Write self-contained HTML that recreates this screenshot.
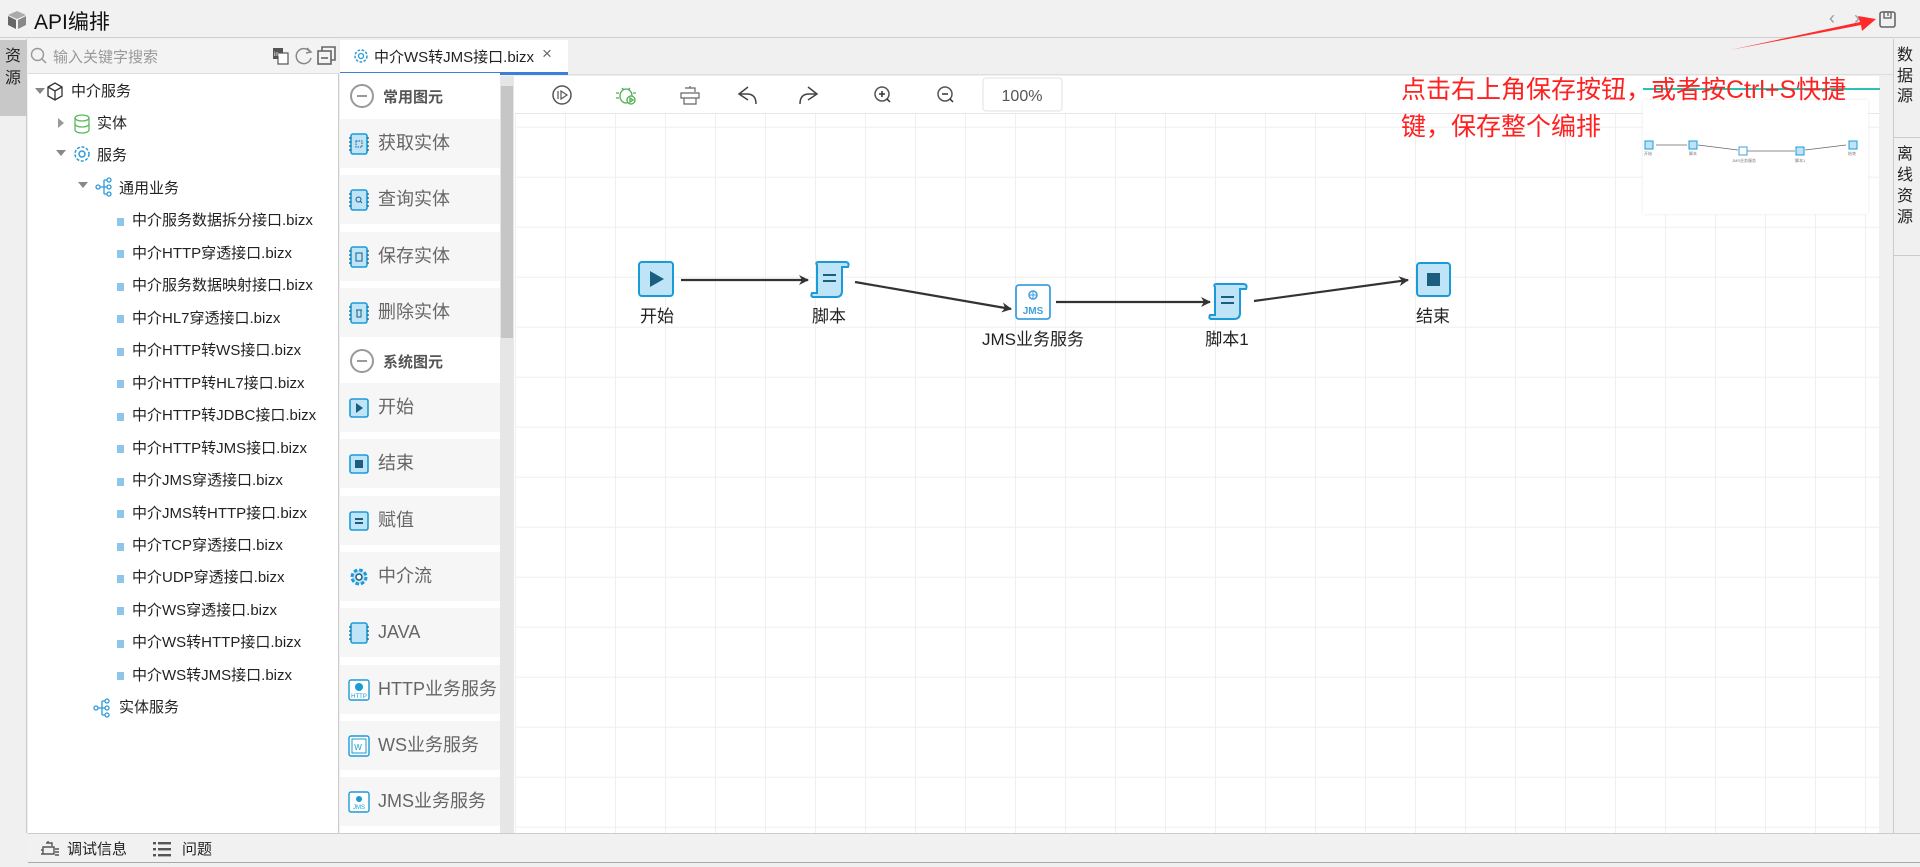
<!DOCTYPE html>
<html><head><meta charset="utf-8">
<style>
*{margin:0;padding:0;box-sizing:border-box}
body{width:1920px;height:867px;overflow:hidden;background:#f0f0f0;font-family:"Liberation Sans","Noto Sans CJK SC",sans-serif;color:#222;position:relative}
.a{position:absolute}
.tr{position:absolute;font-size:15px;white-space:nowrap;line-height:20px}
.pi{position:absolute;left:340px;width:160px;height:49px;background:#f6f6f6}
.pi span{position:absolute;left:38px;top:13px;font-size:18px;color:#666;line-height:22px}
.pi svg{position:absolute;left:8px;top:14px}
.ph{position:absolute;left:340px;width:160px;height:46px;background:#fff}
.ph span{position:absolute;left:43px;top:13px;font-size:15px;font-weight:bold;color:#555}
.ph i{position:absolute;left:10px;top:11px;width:24px;height:24px;border:2px solid #999;border-radius:50%}
.ph i:after{content:"";position:absolute;left:5px;top:9px;width:10px;height:2px;background:#999}
.lbl{position:absolute;font-size:17px;color:#222;white-space:nowrap;transform:translateX(-50%)}
</style></head><body>
<div class="a" style="left:0;top:0;width:1920px;height:38px;background:#f1f1f1;border-bottom:1px solid #cfcfcf"></div>
<svg class="a" style="left:7px;top:10px" width="20" height="20" viewBox="0 0 20 20"><path d="M10 1 L19 5 L10 9 L1 5Z" fill="#aaa"/><path d="M1 6 L9 10 L9 19 L1 15Z" fill="#666"/><path d="M11 10 L19 6 L19 15 L11 19Z" fill="#888"/></svg>
<div class="a" style="left:34px;top:6px;font-size:21px;color:#111">API编排</div>
<div class="a" style="left:1829px;top:8px;font-size:18px;color:#999">&lsaquo;</div>
<div class="a" style="left:1854px;top:8px;font-size:18px;color:#999">&rsaquo;</div>
<svg class="a" style="left:1879px;top:11px" width="17" height="17" viewBox="0 0 17 17"><rect x="1" y="1" width="15" height="15" rx="2" fill="none" stroke="#666" stroke-width="1.6"/><rect x="5" y="1" width="7" height="6" fill="none" stroke="#666" stroke-width="1.4"/><line x1="9" y1="2" x2="9" y2="5" stroke="#666" stroke-width="1.3"/></svg>

<div class="a" style="left:0;top:39px;width:27px;height:794px;background:#f0f0f0;border-right:1px solid #ccc"></div>
<div class="a" style="left:0;top:40px;width:27px;height:76px;background:#c8c8c8"></div>
<div class="a" style="left:5px;top:46px;font-size:16px;line-height:22px;width:18px;color:#222">资<br>源</div>

<div class="a" style="left:28px;top:39px;width:311px;height:794px;background:#fff;border-right:1px solid #ccc"></div>
<div class="a" style="left:28px;top:39px;width:311px;height:35px;background:#f3f3f3;border-bottom:1px solid #ddd"></div>
<svg class="a" style="left:30px;top:47px" width="18" height="18" viewBox="0 0 18 18"><circle cx="7.5" cy="7.5" r="6" fill="none" stroke="#999" stroke-width="1.4"/><line x1="12" y1="12" x2="16" y2="16" stroke="#999" stroke-width="1.5"/></svg>
<div class="a" style="left:53px;top:46px;font-size:15px;color:#999">输入关键字搜索</div>
<svg class="a" style="left:272px;top:47px" width="18" height="18" viewBox="0 0 18 18"><rect x="1" y="1" width="10" height="11" fill="#555"/><rect x="6" y="6" width="10" height="11" fill="#fff" stroke="#555" stroke-width="1.2"/><text x="2" y="9" font-size="6" fill="#fff" font-family="Liberation Sans">in</text></svg>
<svg class="a" style="left:294px;top:46px" width="20" height="20" viewBox="0 0 20 20"><path d="M16 6 A7.5 7.5 0 1 0 17 12" fill="none" stroke="#888" stroke-width="1.5"/><path d="M13 2 L17 6 L12 7" fill="none" stroke="#888" stroke-width="1.5"/></svg>
<svg class="a" style="left:317px;top:46px" width="20" height="20" viewBox="0 0 20 20"><rect x="1" y="5" width="13" height="13" fill="none" stroke="#666" stroke-width="1.6"/><path d="M5 5 V1 H18 V14 H14" fill="none" stroke="#666" stroke-width="1.6"/><line x1="4" y1="12" x2="11" y2="12" stroke="#666" stroke-width="1.6"/></svg>

<svg class="a" style="left:28px;top:74px" width="310" height="660">
<g fill="#888">
<path d="M7 14 L17 14 L12 20Z"/>
<path d="M30 44 L36 49 L30 54Z" fill="#999"/>
<path d="M28 76 L38 76 L33 82Z"/>
<path d="M50 108 L60 108 L55 114Z"/>
</g>
<g fill="none" stroke="#333" stroke-width="1.3"><path d="M20 13 L27 9 L34 13 L34 22 L27 26 L20 22Z M20 13 L27 17 L34 13 M27 17 V26"/></g>
<g fill="none" stroke="#5cb85c" stroke-width="1.3"><ellipse cx="54" cy="44" rx="7" ry="3"/><path d="M47 44 V56 A7 3 0 0 0 61 56 V44 M47 50 A7 3 0 0 0 61 50"/></g>
<g fill="none" stroke="#2b9ad9" stroke-width="1.5"><circle cx="54" cy="80" r="3"/><circle cx="54" cy="80" r="7" stroke-dasharray="3 1.6"/></g>
<g fill="none" stroke="#2b9ad9" stroke-width="1.3" transform="translate(-8,0)"><circle cx="78" cy="113" r="2"/><path d="M80 113 H84 M84 106 V120 M84 106 H87 M84 113 H87 M84 120 H87"/><circle cx="89" cy="106" r="2"/><circle cx="89" cy="113" r="2"/><circle cx="89" cy="120" r="2"/></g>
<g fill="none" stroke="#2b9ad9" stroke-width="1.3" transform="translate(14,0)"><circle cx="54" cy="634" r="2"/><path d="M56 634 H60 M60 627 V641 M60 627 H63 M60 634 H63 M60 641 H63"/><circle cx="65" cy="627" r="2"/><circle cx="65" cy="634" r="2"/><circle cx="65" cy="641" r="2"/></g>
<g fill="#8ec6ea">
<rect x="89" y="144" width="7" height="8"/><rect x="89" y="176" width="7" height="8"/><rect x="89" y="209" width="7" height="8"/><rect x="89" y="241" width="7" height="8"/><rect x="89" y="274" width="7" height="8"/><rect x="89" y="306" width="7" height="8"/><rect x="89" y="339" width="7" height="8"/><rect x="89" y="371" width="7" height="8"/><rect x="89" y="404" width="7" height="8"/><rect x="89" y="436" width="7" height="8"/><rect x="89" y="469" width="7" height="8"/><rect x="89" y="501" width="7" height="8"/><rect x="89" y="533" width="7" height="8"/><rect x="89" y="566" width="7" height="8"/><rect x="89" y="598" width="7" height="8"/>
</g>
</svg>
<div class="tr" style="left:71px;top:82px">中介服务</div>
<div class="tr" style="left:97px;top:114px">实体</div>
<div class="tr" style="left:97px;top:146px">服务</div>
<div class="tr" style="left:119px;top:179px">通用业务</div>
<div class="tr" style="left:132px;top:211px">中介服务数据拆分接口.bizx</div>
<div class="tr" style="left:132px;top:244px">中介HTTP穿透接口.bizx</div>
<div class="tr" style="left:132px;top:276px">中介服务数据映射接口.bizx</div>
<div class="tr" style="left:132px;top:309px">中介HL7穿透接口.bizx</div>
<div class="tr" style="left:132px;top:341px">中介HTTP转WS接口.bizx</div>
<div class="tr" style="left:132px;top:374px">中介HTTP转HL7接口.bizx</div>
<div class="tr" style="left:132px;top:406px">中介HTTP转JDBC接口.bizx</div>
<div class="tr" style="left:132px;top:439px">中介HTTP转JMS接口.bizx</div>
<div class="tr" style="left:132px;top:471px">中介JMS穿透接口.bizx</div>
<div class="tr" style="left:132px;top:504px">中介JMS转HTTP接口.bizx</div>
<div class="tr" style="left:132px;top:536px">中介TCP穿透接口.bizx</div>
<div class="tr" style="left:132px;top:568px">中介UDP穿透接口.bizx</div>
<div class="tr" style="left:132px;top:601px">中介WS穿透接口.bizx</div>
<div class="tr" style="left:132px;top:633px">中介WS转HTTP接口.bizx</div>
<div class="tr" style="left:132px;top:666px">中介WS转JMS接口.bizx</div>
<div class="tr" style="left:119px;top:698px">实体服务</div>

<div class="a" style="left:340px;top:39px;width:1553px;height:36px;background:#f0f0f0;border-bottom:1px solid #ddd"></div>
<div class="a" style="left:340px;top:40px;width:228px;height:35px;background:#fff;border-bottom:3px solid #3c7fd8"></div>
<svg class="a" style="left:353px;top:48px" width="16" height="16" viewBox="0 0 16 16"><circle cx="8" cy="8" r="2.5" fill="none" stroke="#2b9ad9" stroke-width="1.3"/><circle cx="8" cy="8" r="6" fill="none" stroke="#2b9ad9" stroke-width="1.5" stroke-dasharray="2.6 1.5"/></svg>
<div class="a" style="left:374px;top:46px;font-size:15px;color:#222">中介WS转JMS接口.bizx</div>
<div class="a" style="left:542px;top:44px;font-size:17px;color:#666">×</div>

<div class="a" style="left:340px;top:76px;width:175px;height:757px;background:#fff"></div>
<div class="ph" style="top:73px"><i></i><span>常用图元</span></div>
<div class="pi" style="top:119px"><svg width="22" height="22" viewBox="0 0 22 22"><rect x="3" y="1" width="16" height="20" rx="2" fill="#bfe3f7" stroke="#1a9bd7" stroke-width="1.6"/><path d="M1 5H3M1 9H3M1 13H3M1 17H3M19 5H21M19 9H21M19 13H21M19 17H21" stroke="#1a5f80" stroke-width="1.3"/><rect x="8" y="8" width="6" height="6" fill="none" stroke="#1a5f80" stroke-width="1" stroke-dasharray="1.5 1"/></svg><span>获取实体</span></div>
<div class="pi" style="top:175px"><svg width="22" height="22" viewBox="0 0 22 22"><rect x="3" y="1" width="16" height="20" rx="2" fill="#bfe3f7" stroke="#1a9bd7" stroke-width="1.6"/><path d="M1 5H3M1 9H3M1 13H3M1 17H3M19 5H21M19 9H21M19 13H21M19 17H21" stroke="#1a5f80" stroke-width="1.3"/><circle cx="10.5" cy="10.5" r="2.5" fill="none" stroke="#1a5f80"/><path d="M12.5 12.5 L14 14" stroke="#1a5f80"/></svg><span>查询实体</span></div>
<div class="pi" style="top:232px"><svg width="22" height="22" viewBox="0 0 22 22"><rect x="3" y="1" width="16" height="20" rx="2" fill="#bfe3f7" stroke="#1a9bd7" stroke-width="1.6"/><path d="M1 5H3M1 9H3M1 13H3M1 17H3M19 5H21M19 9H21M19 13H21M19 17H21" stroke="#1a5f80" stroke-width="1.3"/><rect x="8" y="7" width="6" height="8" fill="none" stroke="#1a5f80"/></svg><span>保存实体</span></div>
<div class="pi" style="top:288px"><svg width="22" height="22" viewBox="0 0 22 22"><rect x="3" y="1" width="16" height="20" rx="2" fill="#bfe3f7" stroke="#1a9bd7" stroke-width="1.6"/><path d="M1 5H3M1 9H3M1 13H3M1 17H3M19 5H21M19 9H21M19 13H21M19 17H21" stroke="#1a5f80" stroke-width="1.3"/><path d="M8 8H14M9 8V15H13V8" fill="none" stroke="#1a5f80"/></svg><span>删除实体</span></div>
<div class="ph" style="top:338px"><i></i><span>系统图元</span></div>
<div class="pi" style="top:383px"><svg width="22" height="22" viewBox="0 0 22 22"><rect x="2" y="2" width="18" height="18" rx="2" fill="#bfe3f7" stroke="#1a9bd7" stroke-width="1.6"/><path d="M8 6 L15 11 L8 16Z" fill="#1a5f80"/></svg><span>开始</span></div>
<div class="pi" style="top:439px"><svg width="22" height="22" viewBox="0 0 22 22"><rect x="2" y="2" width="18" height="18" rx="2" fill="#bfe3f7" stroke="#1a9bd7" stroke-width="1.6"/><rect x="7" y="7" width="8" height="8" fill="#1a5f80"/></svg><span>结束</span></div>
<div class="pi" style="top:496px"><svg width="22" height="22" viewBox="0 0 22 22"><rect x="2" y="2" width="18" height="18" rx="2" fill="#bfe3f7" stroke="#1a9bd7" stroke-width="1.6"/><path d="M7 9H15M7 13H15" stroke="#1a5f80" stroke-width="2"/></svg><span>赋值</span></div>
<div class="pi" style="top:552px"><svg width="22" height="22" viewBox="0 0 22 22"><circle cx="11" cy="11" r="7" fill="#bfe3f7" stroke="#1a9bd7" stroke-width="3" stroke-dasharray="3.5 2"/><circle cx="11" cy="11" r="3" fill="#fff" stroke="#1a5f80" stroke-width="1.5"/></svg><span>中介流</span></div>
<div class="pi" style="top:608px"><svg width="22" height="22" viewBox="0 0 22 22"><rect x="3" y="1" width="16" height="20" rx="2" fill="#bfe3f7" stroke="#1a9bd7" stroke-width="1.6"/><path d="M1 5H3M1 9H3M1 13H3M1 17H3M19 5H21M19 9H21M19 13H21M19 17H21" stroke="#1a5f80" stroke-width="1.3"/></svg><span>JAVA</span></div>
<div class="pi" style="top:665px"><svg width="22" height="22" viewBox="0 0 22 22"><rect x="1" y="1" width="20" height="20" rx="2" fill="#fff" stroke="#1a9bd7" stroke-width="1.4"/><circle cx="11" cy="8" r="4" fill="#1a9bd7"/><text x="11" y="19" font-size="6" text-anchor="middle" fill="#1a9bd7" font-family="Liberation Sans">HTTP</text></svg><span>HTTP业务服务</span></div>
<div class="pi" style="top:721px"><svg width="22" height="22" viewBox="0 0 22 22"><rect x="1" y="1" width="20" height="20" rx="2" fill="#fff" stroke="#1a9bd7" stroke-width="1.4"/><rect x="4" y="4" width="14" height="14" fill="none" stroke="#1a9bd7"/><text x="10" y="15" font-size="8" text-anchor="middle" fill="#1a9bd7" font-family="Liberation Sans">W</text></svg><span>WS业务服务</span></div>
<div class="pi" style="top:777px"><svg width="22" height="22" viewBox="0 0 22 22"><rect x="1" y="1" width="20" height="20" rx="2" fill="#fff" stroke="#1a9bd7" stroke-width="1.4"/><circle cx="11" cy="8" r="3" fill="#1a9bd7"/><text x="11" y="18" font-size="6" text-anchor="middle" fill="#1a9bd7" font-family="Liberation Sans">JMS</text></svg><span>JMS业务服务</span></div>
<div class="a" style="left:500px;top:76px;width:14px;height:757px;background:#e6e6e6"></div>
<div class="a" style="left:501px;top:86px;width:12px;height:252px;background:#c6c6c6"></div>

<div class="a" style="left:515px;top:76px;width:1364px;height:757px;background-color:#fff;background-image:linear-gradient(#efefef 1px,transparent 1px),linear-gradient(90deg,#efefef 1px,transparent 1px);background-size:50px 50px;background-position:0 0.7px"></div>
<div class="a" style="left:1879px;top:76px;width:14px;height:757px;background:#f0f0f0"></div>
<div class="a" style="left:515px;top:76px;width:1364px;height:38px;background:#fff;border-bottom:1px solid #e6e6e6"></div>
<svg class="a" style="left:515px;top:76px" width="560" height="38">
<g fill="none" stroke="#555" stroke-width="1.5">
<circle cx="47" cy="19" r="9"/><path d="M43 15 V23 M46 15 L52 19 L46 23Z" stroke-width="1.2"/>
<path d="M233 11 L224 18 L233 24 M224 18 H232 Q241 18 241 28" stroke="#444"/>
<path d="M293 11 L302 18 L293 24 M302 18 H294 Q285 18 285 28" stroke="#444"/>
<circle cx="367" cy="18" r="7"/><path d="M364 18H370M367 15V21M372 23L375 26" stroke="#333"/>
<circle cx="430" cy="18" r="7"/><path d="M427 18H433M435 23L438 26" stroke="#333"/>
</g>
<g fill="none" stroke="#4caf50" stroke-width="1.3"><ellipse cx="111" cy="20" rx="6" ry="7"/><path d="M107 12 L109 14 M115 12 L113 14 M104 17 H101 M104 22 H101 M118 17 H121"/><circle cx="116" cy="24" r="4" fill="#fff"/><path d="M115 22 L118 24 L115 26Z"/></g>
<g fill="none" stroke="#666" stroke-width="1.2"><path d="M170 12 H180 V16 M166 17 H184 V22 H166Z M169 22 V28 H181 V22 M175 10 V12"/></g>
<rect x="468" y="2" width="79" height="33" rx="3" fill="#fff" stroke="#e2e2e2"/>
<text x="507" y="25" font-size="16" fill="#555" text-anchor="middle" font-family="Liberation Sans">100%</text>
</svg>

<svg class="a" style="left:515px;top:115px" width="1364" height="300">
<defs><marker id="ar" markerWidth="10" markerHeight="10" refX="9" refY="5" orient="auto" markerUnits="userSpaceOnUse"><path d="M0 0 L10 5 L0 10 L3 5Z" fill="#333"/></marker></defs>
<g stroke="#333" stroke-width="2.2" fill="none" marker-end="url(#ar)">
<line x1="166" y1="165" x2="293" y2="165"/>
<line x1="340" y1="167" x2="496" y2="194"/>
<line x1="541" y1="187" x2="695" y2="187"/>
<line x1="739" y1="186" x2="893" y2="165"/>
</g>
<rect x="124" y="147" width="34" height="34" rx="3" fill="#bfe3f7" stroke="#1a9bd7" stroke-width="2"/><path d="M135 156 L149 164 L135 172Z" fill="#1a5f80"/>
<path d="M302 150 Q300 147 304 147 H330 Q335 147 333 152 H327 V176 Q327 182 321 182 H299 Q295 182 297 178 H302Z" fill="#bfe3f7" stroke="#1a9bd7" stroke-width="2"/><path d="M308 160H321M308 166H321" stroke="#1a5f80" stroke-width="2"/>
<rect x="501" y="170" width="34" height="34" rx="3" fill="#fff" stroke="#3ea0e0" stroke-width="1.8"/><circle cx="518" cy="180" r="4" fill="none" stroke="#3ea0e0" stroke-width="1.5"/><path d="M514 180H522M518 176V184" stroke="#3ea0e0"/><text x="518" y="199" font-size="10" text-anchor="middle" fill="#3ea0e0" font-family="Liberation Sans" font-weight="bold">JMS</text>
<path d="M700 172 Q698 169 702 169 H728 Q733 169 731 174 H725 V198 Q725 204 719 204 H697 Q693 204 695 200 H700Z" fill="#bfe3f7" stroke="#1a9bd7" stroke-width="2"/><path d="M706 182H719M706 188H719" stroke="#1a5f80" stroke-width="2"/>
<rect x="902" y="148" width="33" height="33" rx="3" fill="#bfe3f7" stroke="#1a9bd7" stroke-width="2"/><rect x="912" y="158" width="13" height="13" fill="#1a5f80"/>
</svg>
<div class="lbl" style="left:657px;top:302px">开始</div>
<div class="lbl" style="left:829px;top:302px">脚本</div>
<div class="lbl" style="left:1033px;top:325px">JMS业务服务</div>
<div class="lbl" style="left:1227px;top:325px">脚本1</div>
<div class="lbl" style="left:1433px;top:302px">结束</div>

<div class="a" style="left:1643px;top:100px;width:225px;height:114px;background:#fff;box-shadow:0 0 3px #e8e8e8"></div>
<svg class="a" style="left:1643px;top:100px" width="225" height="114" font-family="Liberation Sans,Noto Sans CJK SC" font-size="4" fill="#777">
<g stroke="#666" stroke-width="0.7"><line x1="13" y1="45" x2="44" y2="45"/><line x1="55" y1="45" x2="95" y2="50"/><line x1="104" y1="51" x2="152" y2="51"/><line x1="162" y1="50" x2="203" y2="45"/></g>
<rect x="2" y="41" width="8" height="8" fill="#bfe3f7" stroke="#1a9bd7"/><rect x="46" y="41" width="8" height="8" fill="#bfe3f7" stroke="#1a9bd7"/><rect x="96" y="47" width="8" height="8" fill="#fff" stroke="#3ea0e0"/><rect x="153" y="47" width="8" height="8" fill="#bfe3f7" stroke="#1a9bd7"/><rect x="206" y="41" width="8" height="8" fill="#bfe3f7" stroke="#1a9bd7"/>
<text x="1" y="55">开始</text><text x="46" y="55">脚本</text><text x="89" y="62">JMS业务服务</text><text x="152" y="62">脚本1</text><text x="205" y="55">结束</text>
</svg>
<div class="a" style="left:1643px;top:88px;width:237px;height:2px;background:#2cc1b0"></div>
<div class="a" style="left:1401px;top:72px;font-size:25px;line-height:37px;color:#ff2020;white-space:nowrap">点击右上角保存按钮，或者按Ctrl+S快捷<br>键，保存整个编排</div>
<svg class="a" style="left:1720px;top:10px" width="170" height="50"><path d="M10 40 L140 12 L138 6 L156 9 L142 21 L141 15 Z" fill="#ff2a2a"/></svg>

<div class="a" style="left:1893px;top:39px;width:27px;height:794px;background:#f0f0f0;border-left:1px solid #ccc"></div>
<div class="a" style="left:1893px;top:137px;width:27px;height:1px;background:#ccc"></div>
<div class="a" style="left:1893px;top:255px;width:27px;height:1px;background:#ccc"></div>
<div class="a" style="left:1897px;top:46px;font-size:16px;line-height:20.5px;width:18px;color:#222">数<br>据<br>源</div>
<div class="a" style="left:1897px;top:144px;font-size:16px;line-height:21px;width:18px;color:#222">离<br>线<br>资<br>源</div>

<div class="a" style="left:28px;top:833px;width:1892px;height:30px;background:#f1f1f1;border-top:1px solid #ccc;border-bottom:1px solid #aaa"></div>
<svg class="a" style="left:40px;top:840px" width="20" height="18" viewBox="0 0 20 18"><g fill="none" stroke="#555" stroke-width="1.4"><path d="M6 3 H12 V6 M3 7 H14 V14 H3Z M1 10 H3 M1 14 H3 M8 1 V3"/><path d="M15 9 H19 M15 12 H19 M15 15 H19"/></g></svg>
<div class="a" style="left:67px;top:838px;font-size:15px;color:#222">调试信息</div>
<svg class="a" style="left:153px;top:841px" width="18" height="16" viewBox="0 0 18 16"><g fill="#555"><rect x="0" y="1" width="3" height="2.4"/><rect x="5" y="1" width="13" height="2.4"/><rect x="0" y="7" width="3" height="2.4"/><rect x="5" y="7" width="13" height="2.4"/><rect x="0" y="13" width="3" height="2.4"/><rect x="5" y="13" width="13" height="2.4"/></g></svg>
<div class="a" style="left:182px;top:838px;font-size:15px;color:#222">问题</div>
</body></html>
